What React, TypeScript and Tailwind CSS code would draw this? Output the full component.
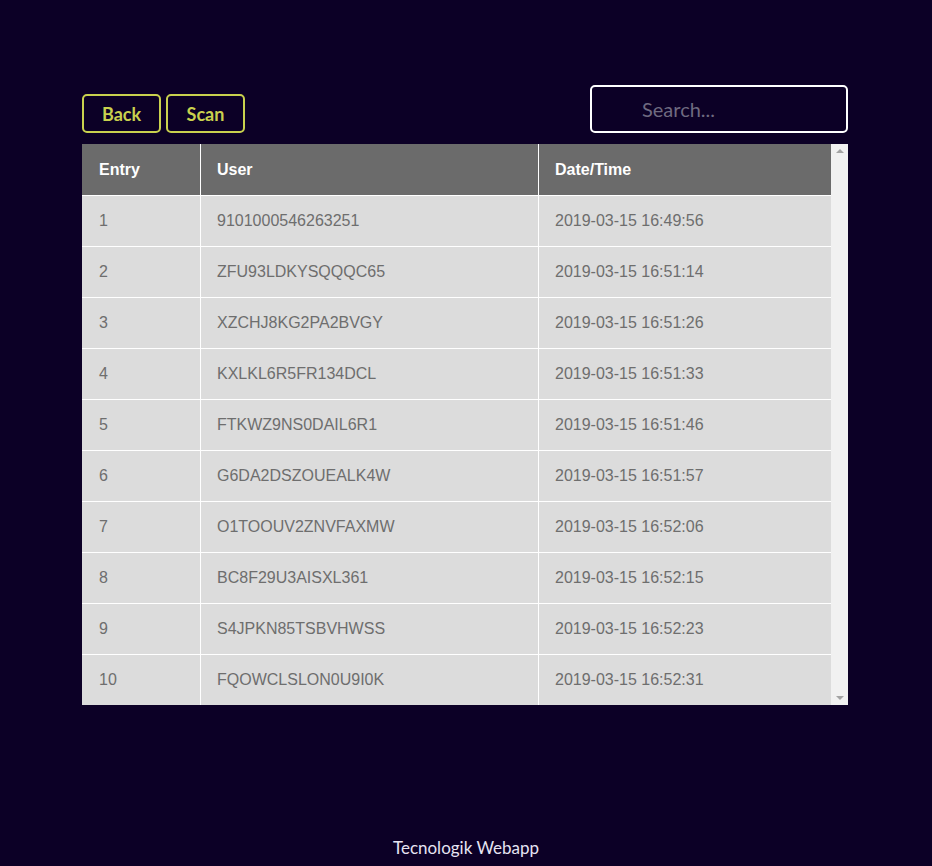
import React from "react";

const rows = [
  ["1", "9101000546263251", "2019-03-15 16:49:56"],
  ["2", "ZFU93LDKYSQQQC65", "2019-03-15 16:51:14"],
  ["3", "XZCHJ8KG2PA2BVGY", "2019-03-15 16:51:26"],
  ["4", "KXLKL6R5FR134DCL", "2019-03-15 16:51:33"],
  ["5", "FTKWZ9NS0DAIL6R1", "2019-03-15 16:51:46"],
  ["6", "G6DA2DSZOUEALK4W", "2019-03-15 16:51:57"],
  ["7", "O1TOOUV2ZNVFAXMW", "2019-03-15 16:52:06"],
  ["8", "BC8F29U3AISXL361", "2019-03-15 16:52:15"],
  ["9", "S4JPKN85TSBVHWSS", "2019-03-15 16:52:23"],
  ["10", "FQOWCLSLON0U9I0K", "2019-03-15 16:52:31"],
];

export default function App() {
  return (
    <div className="w-[932px] h-[866px] bg-[#0c0026] flex flex-col" style={{ fontFamily: "'Liberation Sans', Arial, sans-serif" }}>
      <div className="ml-[82px] mt-[85px] w-[766px]">
        <div className="flex items-end justify-between h-[48px]">
          <div className="flex gap-[5px]">
            <button className="w-[79px] h-[39px] border-2 border-[#c9d14e] rounded-[5px] text-[#c9d14e] font-bold text-[18px] pt-[1px]" style={{ fontFamily: "Lato, 'Open Sans', sans-serif" }}>Back</button>
            <button className="w-[79px] h-[39px] border-2 border-[#c9d14e] rounded-[5px] text-[#c9d14e] font-bold text-[18px] pt-[1px]" style={{ fontFamily: "Lato, 'Open Sans', sans-serif" }}>Scan</button>
          </div>
          <div className="w-[258px] h-[48px] border-2 border-white rounded-[5px] flex items-center pl-[50px]">
            <span className="text-[20px] text-[#6f6a80]" style={{ fontFamily: "Lato, 'Open Sans', sans-serif" }}>Search...</span>
          </div>
        </div>
        <div className="mt-[11px] flex w-[766px] h-[561px] bg-[#dcdcdc]">
          <div className="w-[749px] flex flex-col">
            <div className="flex h-[52px] bg-[#6b6b6b] text-white font-bold text-[16px] border-b border-white">
              <div className="w-[119px] pl-[17px] flex items-center border-r border-white">Entry</div>
              <div className="w-[338px] pl-[16px] flex items-center border-r border-white">User</div>
              <div className="flex-1 pl-[16px] flex items-center">Date/Time</div>
            </div>
            {rows.map((r, i) => (
              <div key={i} className={`flex ${i < 9 ? "h-[51px] border-b border-white" : "h-[50px]"} text-[#6e6e6e] text-[16px]`}>
                <div className="w-[119px] pl-[17px] flex items-center border-r border-white">{r[0]}</div>
                <div className="w-[338px] pl-[16px] flex items-center border-r border-white">{r[1]}</div>
                <div className="flex-1 pl-[16px] flex items-center">{r[2]}</div>
              </div>
            ))}
          </div>
          <div className="w-[17px] bg-[#f1f1f1] flex flex-col justify-between items-center py-[5px]">
            <div className="w-0 h-0 border-l-[4px] border-r-[4px] border-b-[4px] border-l-transparent border-r-transparent border-b-[#a3a3a3]" />
            <div className="w-0 h-0 border-l-[4px] border-r-[4px] border-t-[4px] border-l-transparent border-r-transparent border-t-[#a3a3a3]" />
          </div>
        </div>
      </div>
      <div className="mt-auto pb-[6px] text-center text-[17px] text-[#e6e4f2]" style={{ fontFamily: "Lato, 'Open Sans', sans-serif" }}>Tecnologik Webapp</div>
    </div>
  );
}
